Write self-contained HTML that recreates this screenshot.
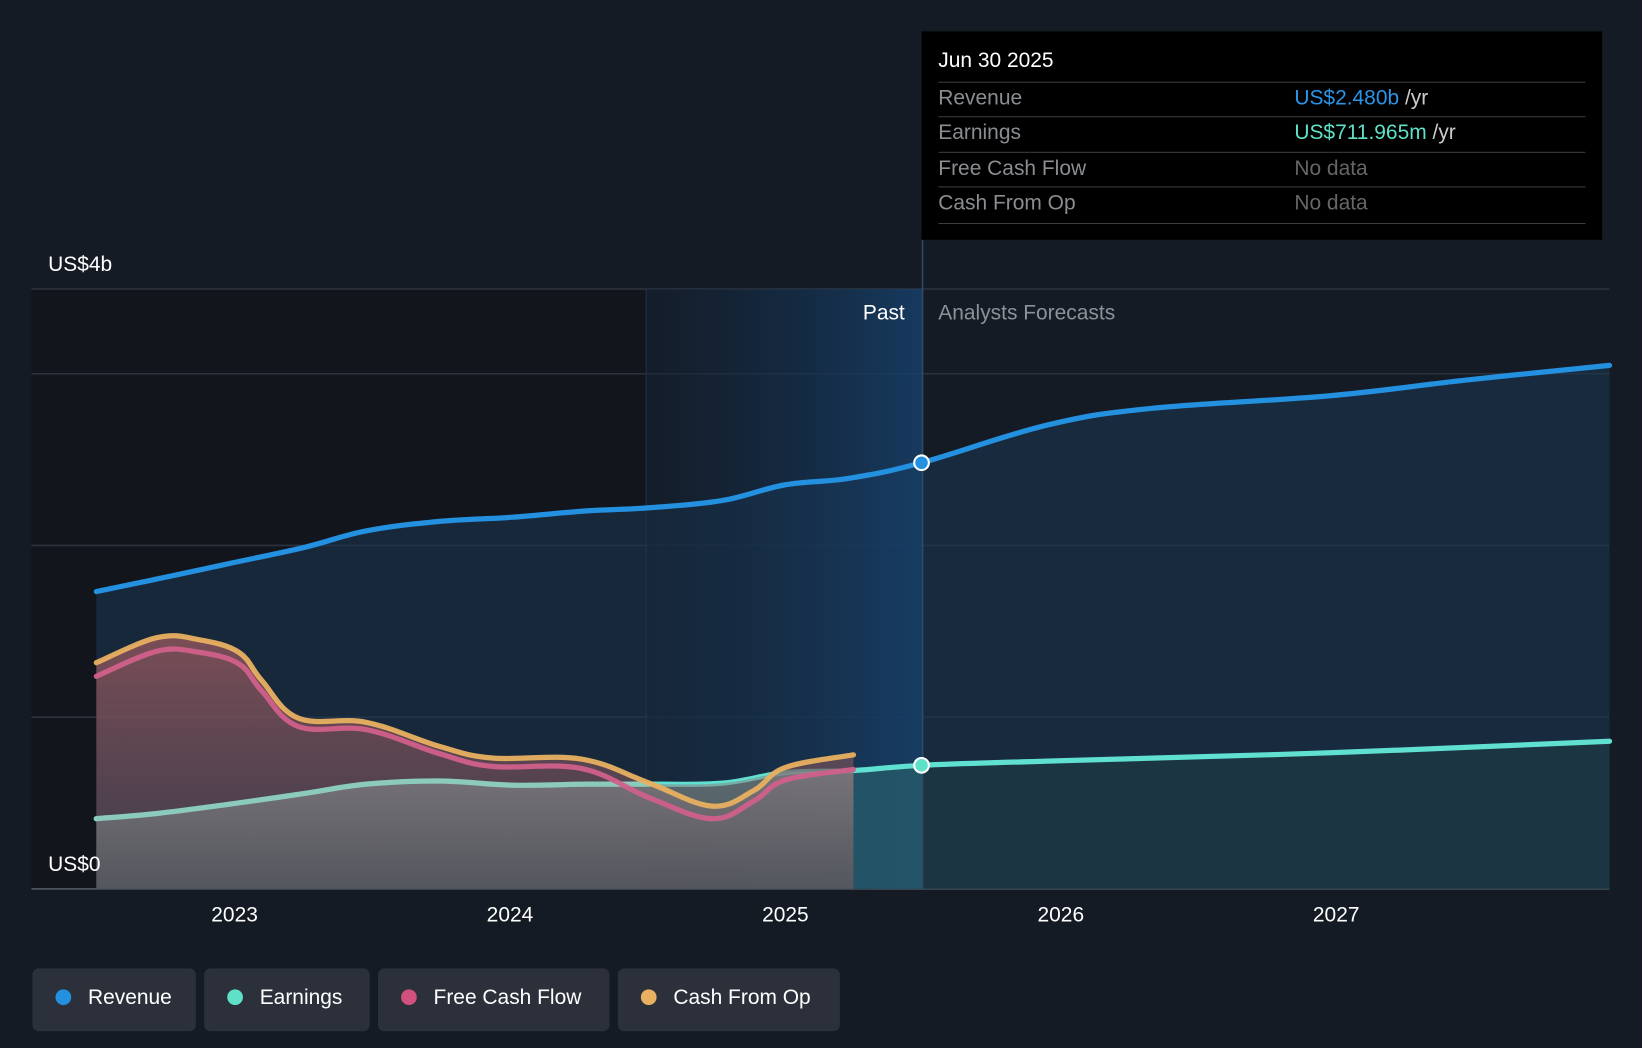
<!DOCTYPE html>
<html><head><meta charset="utf-8"><style>
html,body{margin:0;padding:0;background:#151b24;overflow:hidden;width:1642px;height:1048px}
#w{width:1568px;height:1001px;transform:scale(1.04719,1.04695);transform-origin:0 0;position:relative;font-family:"Liberation Sans",sans-serif}
svg{position:absolute;left:0;top:0}
.tt{position:absolute;left:880px;top:30px;width:650px;height:199px;background:#000}
.tt .h{position:absolute;left:16px;top:17px;color:#fff;font-size:20px}
.row{position:absolute;left:16px;width:618px;height:33px;border-top:1.5px solid #3a3d42;font-size:20px;color:#8a8d92;line-height:30px}
.row span{position:absolute;left:340px}
.leg{position:absolute;top:925px;height:60px;background:#2b303a;border-radius:6px;color:#fff;font-size:20px;line-height:56px}
.leg i{position:absolute;left:22px;top:20px;width:15px;height:15px;border-radius:50%}
.leg b{font-weight:normal;position:absolute;left:53px;font-size:20px;color:#fff}
</style></head><body><div id="w">
<svg width="1568" height="1001">
<defs>
<linearGradient id="pg" x1="0" x2="1"><stop offset="0" stop-color="#132233" stop-opacity="0.5"/><stop offset="1" stop-color="#17406a"/></linearGradient>
<linearGradient id="cg" x1="0" y1="0" x2="0" y2="1"><stop offset="0" stop-color="#9a5a60" stop-opacity="0.75"/><stop offset="1" stop-color="#5a4a55" stop-opacity="0.6"/></linearGradient>
<linearGradient id="gg" x1="0" y1="0" x2="0" y2="1"><stop offset="0" stop-color="#8a9090" stop-opacity="0.6"/><stop offset="1" stop-color="#606468" stop-opacity="0.6"/></linearGradient>
<clipPath id="ck"><rect x="815" y="600" width="66" height="249"/></clipPath>
</defs>
<rect x="30" y="276" width="587" height="573" fill="#12151c"/>
<g stroke="#2c323c" stroke-width="1.5"><line x1="30" y1="276" x2="1537" y2="276"/><line x1="30" y1="357" x2="1537" y2="357"/><line x1="30" y1="521" x2="1537" y2="521"/><line x1="30" y1="685" x2="1537" y2="685"/><line x1="30" y1="849" x2="1537" y2="849" stroke="#555b66"/></g>
<path id="revF" fill="#1b3550" fill-opacity="0.6"/>
<rect x="617" y="276" width="264" height="573" fill="url(#pg)" fill-opacity="0.85"/>
<path id="earF" fill="#1e3a44" fill-opacity="0.7"/>
<path id="earF2" fill="#2a6a80" fill-opacity="0.55" clip-path="url(#ck)"/>
<line x1="881" y1="229" x2="881" y2="849" stroke="#2d4a66" stroke-width="1.5"/>
<line x1="617" y1="276" x2="617" y2="849" stroke="#233447" stroke-width="1"/>
<g fill="none" stroke-width="5" stroke-linecap="round">
<path id="revL" stroke="#2390e0"/>
<path id="earL" stroke="#5fe0d0"/>
</g>
<path id="cashF" fill="url(#cg)"/>
<path id="grayF" fill="url(#gg)"/>
<path id="earP" fill="none" stroke="#8fd2c2" stroke-width="5" stroke-linecap="round" stroke-opacity="0.9"/>
<g fill="none" stroke-width="5" stroke-linecap="round">
<path id="fcfL" stroke="#d0608a" stroke-opacity="0.95"/>
<path id="cashL" stroke="#e8b060" stroke-opacity="0.95"/>
</g>
<circle cx="880" cy="442" r="7" fill="#2390e0" stroke="#fff" stroke-width="2"/>
<circle cx="880" cy="731" r="7" fill="#5fe0c8" stroke="#fff" stroke-width="2"/>
<g font-family="Liberation Sans, sans-serif" font-size="20" fill="#fff">
<text x="46" y="259">US$4b</text><text x="46" y="832">US$0</text>
<text x="864" y="305" text-anchor="end">Past</text>
<text x="896" y="305" fill="#8d9199">Analysts Forecasts</text>
<text x="224" y="880" text-anchor="middle">2023</text><text x="487" y="880" text-anchor="middle">2024</text><text x="750" y="880" text-anchor="middle">2025</text><text x="1013" y="880" text-anchor="middle">2026</text><text x="1276" y="880" text-anchor="middle">2027</text>
</g>
</svg>
<div class="tt"><div class="h">Jun 30 2025</div>
<div class="row" style="top:48px">Revenue<span><em style="font-style:normal;color:#2a95e8">US$2.480b</em> <em style="font-style:normal;color:#ccc">/yr</em></span></div>
<div class="row" style="top:81px">Earnings<span><em style="font-style:normal;color:#5fe0c8">US$711.965m</em> <em style="font-style:normal;color:#ccc">/yr</em></span></div>
<div class="row" style="top:115px">Free Cash Flow<span style="color:#666">No data</span></div>
<div class="row" style="top:148px;height:34px;border-bottom:1.5px solid #3a3d42">Cash From Op<span style="color:#666">No data</span></div>
</div>
<div class="leg" style="left:31px;width:156px"><i style="background:#2390e0"></i><b>Revenue</b></div>
<div class="leg" style="left:195px;width:158px"><i style="background:#5fe0c8"></i><b>Earnings</b></div>
<div class="leg" style="left:361px;width:221px"><i style="background:#d0507e"></i><b>Free Cash Flow</b></div>
<div class="leg" style="left:590px;width:212px"><i style="background:#e8b060"></i><b>Cash From Op</b></div>
</div>
<script>
function sm(p){var d="M"+p[0][0]+","+p[0][1];for(var i=0;i<p.length-1;i++){var a=p[i-1]||p[i],b=p[i],c=p[i+1],e=p[i+2]||c;var t=0.18;d+=" C"+(b[0]+(c[0]-a[0])*t)+","+(b[1]+(c[1]-a[1])*t)+" "+(c[0]-(e[0]-b[0])*t)+","+(c[1]-(e[1]-b[1])*t)+" "+c[0]+","+c[1];}return d;}
var R=[[92,565],[150,553],[220,538],[290,523],[350,507],[420,498],[490,494],[560,488],[620,485],[690,478],[750,463],[810,457],[880,442],[1000,406],[1100,390],[1270,378],[1400,363],[1537,349]];
var E=[[92,782],[150,777],[220,768],[290,758],[350,749],[420,746],[490,750],[560,749],[620,749],[690,748],[750,738],[815,736],[880,731],[1000,727],[1270,719],[1537,708]];
var F=[[92,646],[150,622],[190,623],[228,634],[250,660],[285,694],[350,697],[420,720],[470,732],[555,734],[620,762],[680,782],[720,765],[750,745],[815,735]];
var C=[[92,633],[150,609],[190,611],[228,623],[250,650],[285,686],[350,690],[420,713],[470,724],[555,725],[620,748],[680,770],[720,755],[750,733],[815,721]];
var Ep=E.slice(0,9);
function g(id){return document.getElementById(id);}
g("revL").setAttribute("d",sm(R));g("revF").setAttribute("d",sm(R)+" L1537,849 L92,849 Z");
g("earL").setAttribute("d",sm(E));g("earF").setAttribute("d",sm(E)+" L1537,849 L92,849 Z");
g("earF2").setAttribute("d",sm(E)+" L1537,849 L92,849 Z");
g("fcfL").setAttribute("d",sm(F));g("cashL").setAttribute("d",sm(C));
g("cashF").setAttribute("d",sm(C)+" L815,849 L92,849 Z");
g("grayF").setAttribute("d",sm(E.slice(0,12))+" L815,849 L92,849 Z");
g("earP").setAttribute("d",sm(Ep));
</script>
</body></html>
